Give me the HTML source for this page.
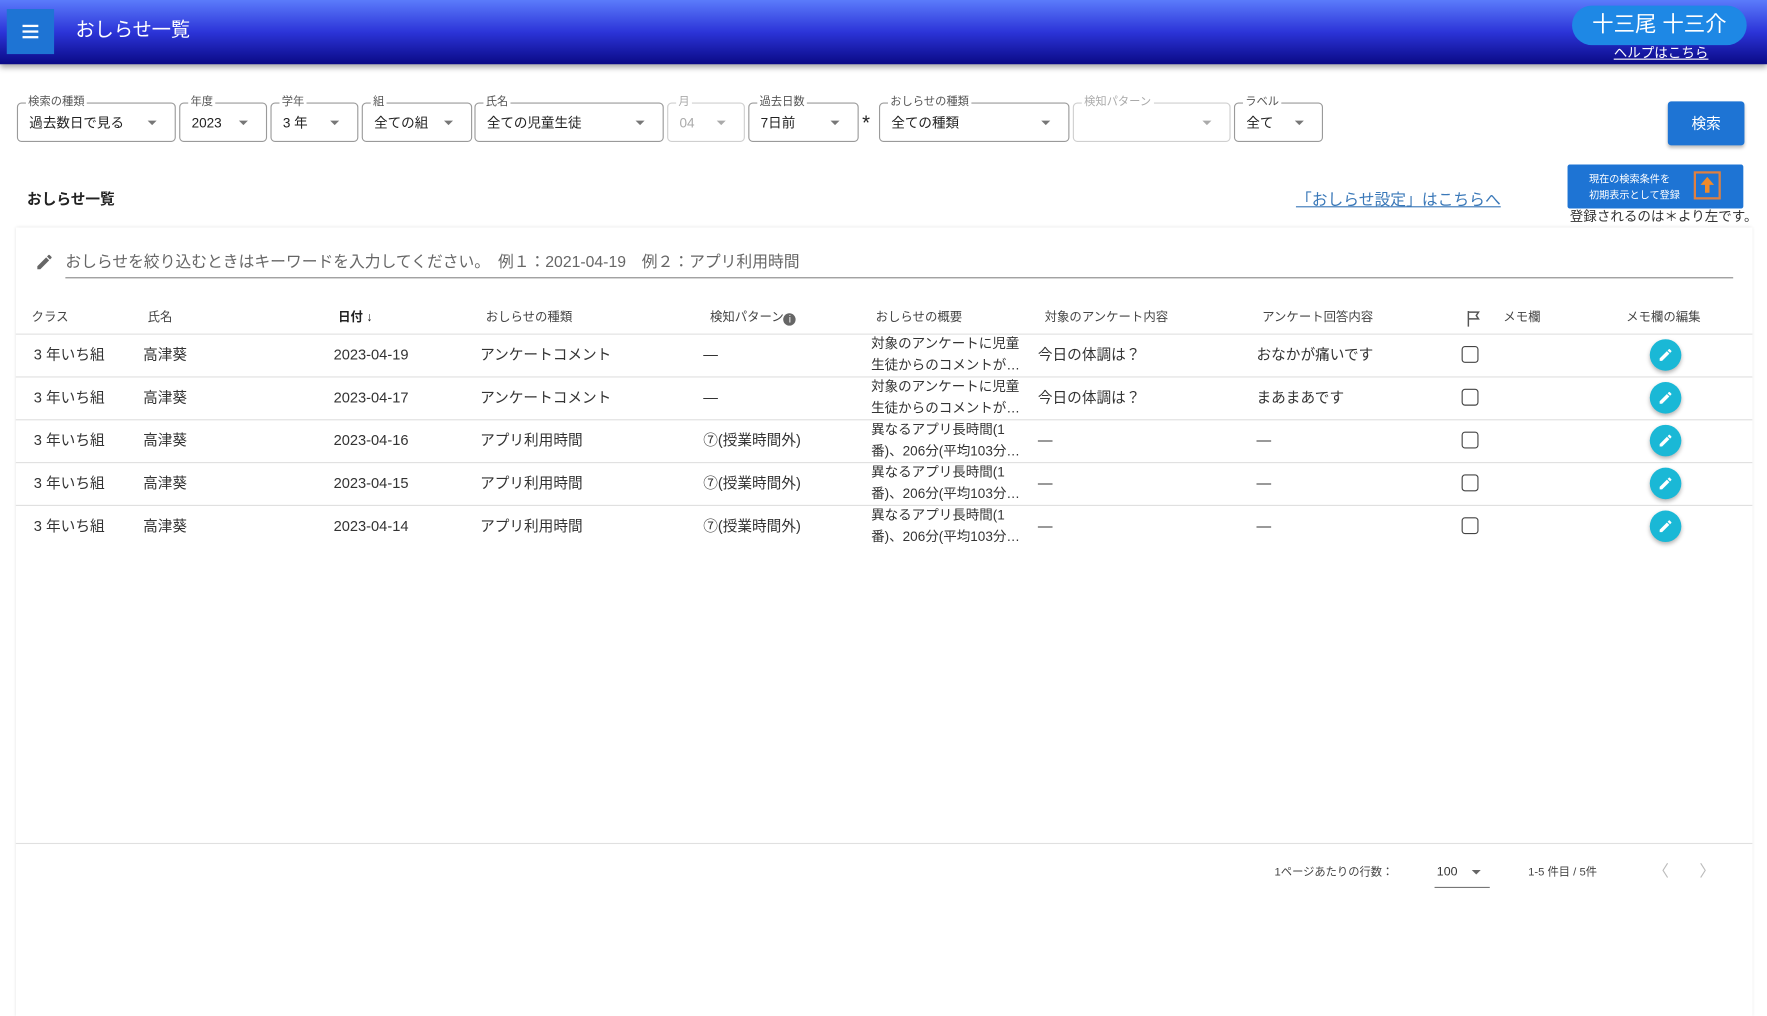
<!DOCTYPE html>
<html><head><meta charset="utf-8"><style>
*{box-sizing:border-box;margin:0;padding:0}
html,body{width:1767px;height:892px;overflow:hidden;background:#fff}
#w{position:absolute;left:0;top:0;width:1568px;height:792px;transform:scale(1.12691);transform-origin:0 0;font-family:"Liberation Sans","Noto Sans CJK JP",sans-serif;color:#222}
.a{position:absolute;white-space:nowrap}
.hdr{position:absolute;left:0;top:0;width:1568px;height:57px;background:linear-gradient(#5b7bfb,#2c34d8 50%,#0a0a86);box-shadow:0 3px 5px rgba(0,0,0,.35)}
.fld{position:absolute;top:91px;height:35px;border:1px solid #9a9a9a;border-radius:4px}
.fld .l{position:absolute;top:-7px;left:7px;background:#fff;padding:0 2px;font-size:10px;color:#555;line-height:12px}
.fld .v{position:absolute;left:10px;top:9px;font-size:12px;line-height:16px;color:#222}
.fld .c{position:absolute;right:16px;top:15px;width:0;height:0;border-left:4px solid transparent;border-right:4px solid transparent;border-top:4px solid #777}
.dis{border-color:#cfcfcf}.dis .l,.dis .v{color:#aaa}.dis .c{border-top-color:#aaa}
.th{position:absolute;top:275px;font-size:11px;line-height:14px;color:#444}
.hl{position:absolute;left:14px;width:1541px;height:1px;background:#e0e0e0}
.td{position:absolute;font-size:13px;line-height:16px;color:#333;white-space:nowrap}
.sm{position:absolute;font-size:12px;line-height:19px;color:#333;left:773px;white-space:nowrap}
.cb{position:absolute;left:1297px;width:15px;height:15px;border:1.5px solid #444;border-radius:3px}
.eb{position:absolute;left:1464px;width:28px;height:28px;border-radius:50%;background:#1ab8d6;box-shadow:0 2px 4px rgba(0,0,0,.3)}
</style></head><body><div id="w">
<div class="hdr"></div>
<div class="a" style="left:6px;top:8px;width:42px;height:40px;background:#1e74d4"></div>
<div class="a" style="left:20px;top:22px;width:14px;height:2px;background:#fff;box-shadow:0 5px 0 #fff,0 10px 0 #fff"></div>
<div class="a" style="left:67px;top:16px;font-size:17px;line-height:22px;color:#fff">おしらせ一覧</div>
<div class="a" style="left:1395px;top:5px;width:155px;height:35px;border-radius:18px;background:#1e88e5;color:#fff;font-size:19px;text-align:center;line-height:35px">十三尾 十三介</div>
<div class="a" style="left:1432px;top:40px;font-size:12px;line-height:14px;color:#fff;text-decoration:underline">ヘルプはこちら</div>

<div class="fld" style="left:15px;width:141px"><span class="l">検索の種類</span><span class="v">過去数日で見る</span><span class="c"></span></div>
<div class="fld" style="left:159px;width:78px"><span class="l">年度</span><span class="v">2023</span><span class="c"></span></div>
<div class="fld" style="left:240px;width:78px"><span class="l">学年</span><span class="v">3 年</span><span class="c"></span></div>
<div class="fld" style="left:321px;width:98px"><span class="l">組</span><span class="v">全ての組</span><span class="c"></span></div>
<div class="fld" style="left:421px;width:168px"><span class="l">氏名</span><span class="v">全ての児童生徒</span><span class="c"></span></div>
<div class="fld dis" style="left:592px;width:69px"><span class="l">月</span><span class="v">04</span><span class="c"></span></div>
<div class="fld" style="left:664px;width:98px"><span class="l">過去日数</span><span class="v">7日前</span><span class="c"></span></div>
<div class="a" style="left:765px;top:99px;font-size:18px;line-height:20px;color:#222">*</div>
<div class="fld" style="left:780px;width:169px"><span class="l">おしらせの種類</span><span class="v">全ての種類</span><span class="c"></span></div>
<div class="fld dis" style="left:952px;width:140px"><span class="l">検知パターン</span><span class="c"></span></div>
<div class="fld" style="left:1095px;width:79px"><span class="l">ラベル</span><span class="v">全て</span><span class="c"></span></div>
<div class="a" style="left:1480px;top:90px;width:68px;height:39px;background:#1e74d4;border-radius:3px;color:#fff;font-size:13px;text-align:center;line-height:39px;box-shadow:0 2px 3px rgba(0,0,0,.25)">検索</div>

<div class="a" style="left:24px;top:169px;font-size:13px;line-height:16px;font-weight:bold;color:#222">おしらせ一覧</div>
<div class="a" style="left:1150px;top:168px;font-size:14px;line-height:18px;color:#3a78b8;text-decoration:underline">「おしらせ設定」はこちらへ</div>
<div class="a" style="left:1391px;top:146px;width:156px;height:39px;background:#1e74d4;border-radius:2px"></div>
<div class="a" style="left:1410px;top:152px;font-size:9px;color:#fff;line-height:14px">現在の検索条件を<br>初期表示として登録</div>
<div class="a" style="left:1503px;top:152px;width:24px;height:25px;border:2px solid #e08040;background:#1e74d4"></div>
<svg class="a" style="left:1507px;top:156px" width="16" height="17"><path d="M8 1L2 8h4v7h4V8h4z" fill="#f08a2a"/></svg>
<div class="a" style="left:1393px;top:185px;font-size:12px;line-height:14px;color:#333">登録されるのは＊より左です。</div>

<div class="a" style="left:14px;top:202px;width:1541px;height:700px;box-shadow:0 0 3px rgba(0,0,0,.12)"></div>
<svg class="a" style="left:31px;top:224px" width="17" height="17" viewBox="0 0 24 24"><path d="M3 17.25V21h3.75L17.8 9.94l-3.75-3.75zM20.7 7.04a1 1 0 000-1.41l-2.34-2.34a1 1 0 00-1.41 0l-1.83 1.83 3.75 3.75z" fill="#666"/></svg>
<div class="a" style="left:58px;top:223px;font-size:14px;line-height:18px;color:#666">おしらせを絞り込むときはキーワードを入力してください。　例１：2021-04-19　例２：アプリ利用時間</div>
<div class="a" style="left:58px;top:246px;width:1480px;height:1px;background:#888"></div>

<div class="th" style="left:28px">クラス</div>
<div class="th" style="left:131px">氏名</div>
<div class="th" style="left:300px;color:#222;font-weight:bold">日付 ↓</div>
<div class="th" style="left:431px">おしらせの種類</div>
<div class="th" style="left:630px">検知パターン<span style="display:inline-block;width:11px;height:11px;border-radius:50%;background:#666;color:#fff;font-size:9px;text-align:center;line-height:11px;vertical-align:-1px">i</span></div>
<div class="th" style="left:777px">おしらせの概要</div>
<div class="th" style="left:927px">対象のアンケート内容</div>
<div class="th" style="left:1120px">アンケート回答内容</div>
<svg class="a" style="left:1301px;top:275px" width="14" height="15"><path d="M2 1v14M2 2h9l-2 3 2 3H2" fill="none" stroke="#555" stroke-width="1.3"/></svg>
<div class="th" style="left:1334px">メモ欄</div>
<div class="th" style="left:1443px">メモ欄の編集</div>

<div class="hl" style="top:296px"></div>
<div class="hl" style="top:334px"></div>
<div class="hl" style="top:372px"></div>
<div class="hl" style="top:410px"></div>
<div class="hl" style="top:448px"></div>

<div class="td" style="left:30px;top:307px">3 年いち組</div><div class="td" style="left:127px;top:307px">高津葵</div><div class="td" style="left:296px;top:307px">2023-04-19</div><div class="td" style="left:426px;top:307px">アンケートコメント</div><div class="td" style="left:624px;top:307px">—</div><div class="sm" style="top:296px">対象のアンケートに児童<br>生徒からのコメントが…</div><div class="td" style="left:921px;top:307px">今日の体調は？</div><div class="td" style="left:1115px;top:307px">おなかが痛いです</div><div class="cb" style="top:307px"></div><div class="eb" style="top:301px"></div>
<div class="td" style="left:30px;top:345px">3 年いち組</div><div class="td" style="left:127px;top:345px">高津葵</div><div class="td" style="left:296px;top:345px">2023-04-17</div><div class="td" style="left:426px;top:345px">アンケートコメント</div><div class="td" style="left:624px;top:345px">—</div><div class="sm" style="top:334px">対象のアンケートに児童<br>生徒からのコメントが…</div><div class="td" style="left:921px;top:345px">今日の体調は？</div><div class="td" style="left:1115px;top:345px">まあまあです</div><div class="cb" style="top:345px"></div><div class="eb" style="top:339px"></div>
<div class="td" style="left:30px;top:383px">3 年いち組</div><div class="td" style="left:127px;top:383px">高津葵</div><div class="td" style="left:296px;top:383px">2023-04-16</div><div class="td" style="left:426px;top:383px">アプリ利用時間</div><div class="td" style="left:624px;top:383px">⑦(授業時間外)</div><div class="sm" style="top:372px">異なるアプリ長時間(1<br>番)、206分(平均103分…</div><div class="td" style="left:921px;top:383px">—</div><div class="td" style="left:1115px;top:383px">—</div><div class="cb" style="top:383px"></div><div class="eb" style="top:377px"></div>
<div class="td" style="left:30px;top:421px">3 年いち組</div><div class="td" style="left:127px;top:421px">高津葵</div><div class="td" style="left:296px;top:421px">2023-04-15</div><div class="td" style="left:426px;top:421px">アプリ利用時間</div><div class="td" style="left:624px;top:421px">⑦(授業時間外)</div><div class="sm" style="top:410px">異なるアプリ長時間(1<br>番)、206分(平均103分…</div><div class="td" style="left:921px;top:421px">—</div><div class="td" style="left:1115px;top:421px">—</div><div class="cb" style="top:421px"></div><div class="eb" style="top:415px"></div>
<div class="td" style="left:30px;top:459px">3 年いち組</div><div class="td" style="left:127px;top:459px">高津葵</div><div class="td" style="left:296px;top:459px">2023-04-14</div><div class="td" style="left:426px;top:459px">アプリ利用時間</div><div class="td" style="left:624px;top:459px">⑦(授業時間外)</div><div class="sm" style="top:448px">異なるアプリ長時間(1<br>番)、206分(平均103分…</div><div class="td" style="left:921px;top:459px">—</div><div class="td" style="left:1115px;top:459px">—</div><div class="cb" style="top:459px"></div><div class="eb" style="top:453px"></div>

<svg class="a" style="left:1471px;top:308px" width="14" height="14" viewBox="0 0 24 24"><path d="M3 17.25V21h3.75L17.8 9.94l-3.75-3.75zM20.7 7.04a1 1 0 000-1.41l-2.34-2.34a1 1 0 00-1.410 0l-1.83 1.83 3.75 3.75z" fill="#fff"/></svg>
<svg class="a" style="left:1471px;top:346px" width="14" height="14" viewBox="0 0 24 24"><path d="M3 17.25V21h3.75L17.8 9.94l-3.75-3.75zM20.7 7.04a1 1 0 000-1.41l-2.34-2.34a1 1 0 00-1.41 0l-1.83 1.83 3.75 3.75z" fill="#fff"/></svg>
<svg class="a" style="left:1471px;top:384px" width="14" height="14" viewBox="0 0 24 24"><path d="M3 17.25V21h3.75L17.8 9.94l-3.75-3.75zM20.7 7.04a1 1 0 000-1.41l-2.34-2.34a1 1 0 00-1.41 0l-1.83 1.83 3.75 3.75z" fill="#fff"/></svg>
<svg class="a" style="left:1471px;top:422px" width="14" height="14" viewBox="0 0 24 24"><path d="M3 17.25V21h3.75L17.8 9.94l-3.75-3.75zM20.7 7.04a1 1 0 000-1.41l-2.34-2.34a1 1 0 00-1.41 0l-1.83 1.83 3.75 3.75z" fill="#fff"/></svg>
<svg class="a" style="left:1471px;top:460px" width="14" height="14" viewBox="0 0 24 24"><path d="M3 17.25V21h3.75L17.8 9.94l-3.75-3.75zM20.7 7.04a1 1 0 000-1.41l-2.34-2.34a1 1 0 00-1.41 0l-1.83 1.83 3.75 3.75z" fill="#fff"/></svg>

<div class="hl" style="top:748px"></div>
<div class="a" style="left:1131px;top:768px;font-size:10px;line-height:13px;color:#444">1ページあたりの行数：</div>
<div class="a" style="left:1275px;top:767px;font-size:11px;line-height:14px;color:#333">100</div>
<div class="a" style="left:1306px;top:772px;width:0;height:0;border-left:4px solid transparent;border-right:4px solid transparent;border-top:4px solid #666"></div>
<div class="a" style="left:1273px;top:787px;width:49px;height:1px;background:#777"></div>
<div class="a" style="left:1356px;top:768px;font-size:10px;line-height:13px;color:#444">1-5 件目 / 5件</div>
<div class="a" style="left:1467px;top:765px;font-size:14px;line-height:16px;color:#bbb">〈</div>
<div class="a" style="left:1508px;top:765px;font-size:14px;line-height:16px;color:#bbb">〉</div>
</div></body></html>
